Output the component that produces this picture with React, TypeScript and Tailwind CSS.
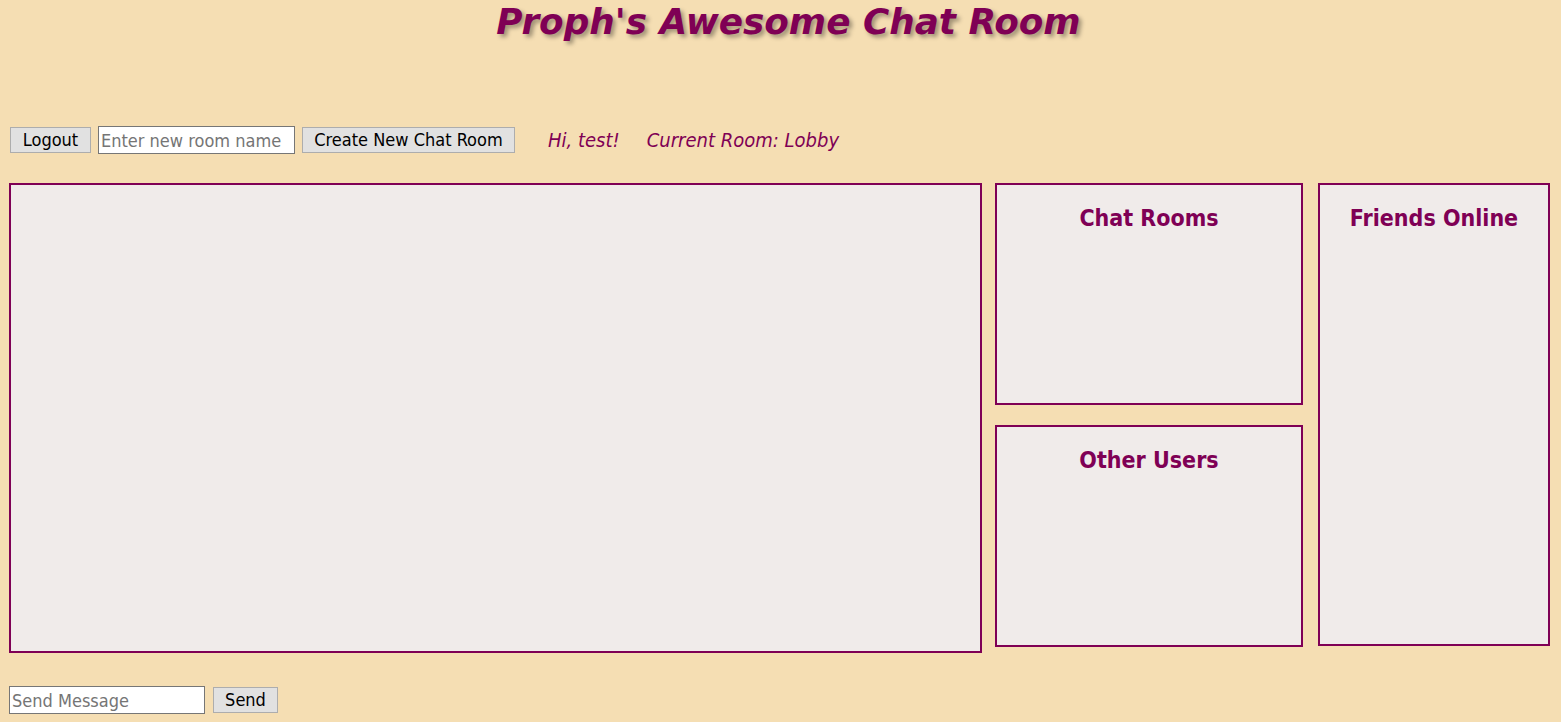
export default function App() {
  const box = 'border-2 border-[#7f0055] bg-[#f0ebea]';
  const heading = "text-center text-[23px] font-bold text-[#7f0055] pt-[18px] leading-[30px]";

  return (
    <div className="min-h-[722px] bg-[#f5deb3] font-['DejaVu_Sans_Condensed','DejaVu_Sans',sans-serif] text-black">
      <h1 className="pl-[16px] text-center font-['DejaVu_Sans',sans-serif] text-[35.8px] font-bold italic leading-[44px] text-[#7f0055] [text-shadow:3px_3px_4px_rgba(0,0,0,0.35)]">
        Proph's Awesome Chat Room
      </h1>

      <div className="mt-[82px] flex h-[28px] items-center pl-[10px]">
        <button className="h-[26px] w-[81px] border border-[#adadad] bg-[#e1e1e1] text-[18px] leading-none">
          Logout
        </button>
        <input
          className="ml-[7px] h-[28px] w-[197px] border border-[#767676] bg-white px-[2px] text-[18px] outline-none placeholder:text-[#757575]"
          placeholder="Enter new room name"
        />
        <button className="ml-[7px] h-[26px] w-[213px] border border-[#adadad] bg-[#e1e1e1] text-[18px] leading-none">
          Create New Chat Room
        </button>
        <span className="ml-[33px] text-[20px] italic leading-[28px] text-[#7f0055]">Hi, test!</span>
        <span className="ml-[27px] text-[20px] italic leading-[28px] text-[#7f0055]">Current Room: Lobby</span>
      </div>

      <div className="mt-[29px] flex items-start pl-[9px]">
        <div className={`${box} h-[470px] w-[973px]`} />
        <div className="ml-[13px] flex w-[308px] flex-col gap-[20px]">
          <div className={`${box} h-[222px]`}>
            <h2 className={heading}>Chat Rooms</h2>
          </div>
          <div className={`${box} h-[222px]`}>
            <h2 className={heading}>Other Users</h2>
          </div>
        </div>
        <div className={`${box} ml-[15px] h-[463px] w-[232px]`}>
          <h2 className={heading}>Friends Online</h2>
        </div>
      </div>

      <div className="mt-[33px] flex items-center pl-[9px]">
        <input
          className="h-[28px] w-[196px] border border-[#767676] bg-white px-[2px] text-[18px] outline-none placeholder:text-[#757575]"
          placeholder="Send Message"
        />
        <button className="ml-[8px] h-[26px] w-[65px] border border-[#adadad] bg-[#e1e1e1] text-[18px] leading-none">
          Send
        </button>
      </div>
    </div>
  );
}
